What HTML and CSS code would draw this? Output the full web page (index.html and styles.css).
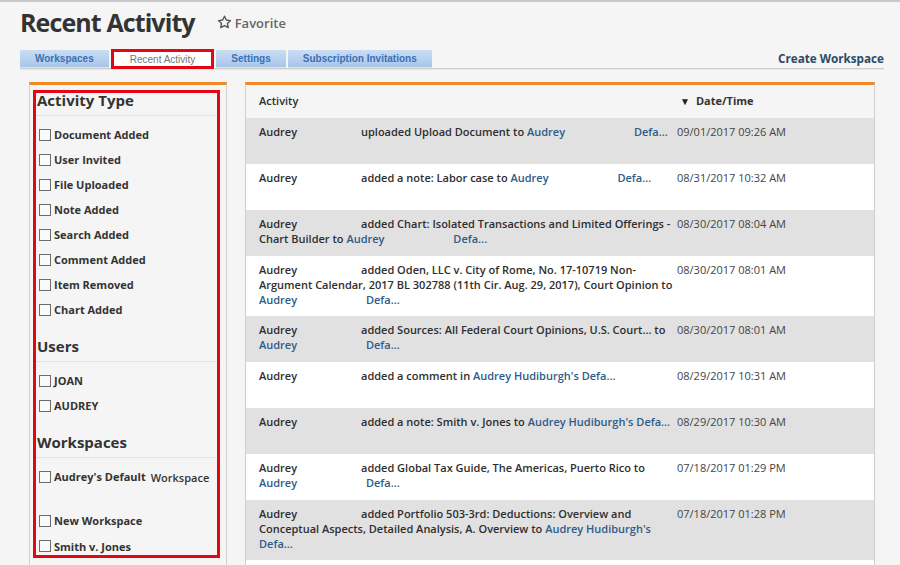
FILE: index.html
```html
<!DOCTYPE html>
<html>
<head>
<meta charset="utf-8">
<title>Recent Activity</title>
<link rel="stylesheet" href="styles.css">
</head>
<body>
<div class="page">
  <header class="title-row">
    <h1 class="title">Recent Activity</h1>
    <span class="favorite">
      <svg class="star" viewBox="0 0 16 16" width="15" height="15"><path d="M8 1.3l1.95 4.1 4.45.55-3.28 3.08.85 4.42L8 11.27l-3.97 2.18.85-4.42L1.6 5.95l4.45-.55z" fill="none" stroke="#555" stroke-width="1.5" stroke-linejoin="round"/></svg>
      Favorite
    </span>
  </header>

  <nav class="tabbar">
    <div class="tabs">
      <span class="tab">Workspaces</span>
      <span class="tab tab-active">Recent Activity</span>
      <span class="tab">Settings</span>
      <span class="tab">Subscription Invitations</span>
    </div>
    <a class="create-link">Create Workspace</a>
  </nav>

  <main class="content">
    <aside class="filters">
      <div class="filter-box">
        <h2 class="filter-heading">Activity Type</h2>
        <ul class="filter-list">
          <li class="filter-item"><span class="checkbox"></span>Document Added</li>
          <li class="filter-item"><span class="checkbox"></span>User Invited</li>
          <li class="filter-item"><span class="checkbox"></span>File Uploaded</li>
          <li class="filter-item"><span class="checkbox"></span>Note Added</li>
          <li class="filter-item"><span class="checkbox"></span>Search Added</li>
          <li class="filter-item"><span class="checkbox"></span>Comment Added</li>
          <li class="filter-item"><span class="checkbox"></span>Item Removed</li>
          <li class="filter-item"><span class="checkbox"></span>Chart Added</li>
        </ul>
        <h2 class="filter-heading section">Users</h2>
        <ul class="filter-list">
          <li class="filter-item"><span class="checkbox"></span>JOAN</li>
          <li class="filter-item"><span class="checkbox"></span>AUDREY</li>
        </ul>
        <h2 class="filter-heading section">Workspaces</h2>
        <ul class="filter-list">
          <li class="filter-item filter-item-tall"><span class="checkbox"></span>Audrey's Default <span class="label-tail">Workspace</span></li>
          <li class="filter-item"><span class="checkbox"></span>New Workspace</li>
          <li class="filter-item filter-item-last"><span class="checkbox"></span>Smith v. Jones</li>
        </ul>
      </div>
    </aside>

    <section class="activity">
      <div class="row head-row">
        <div class="cell-activity">Activity</div>
        <div class="cell-date head-date"><span class="sort-arrow">&#9660;</span>Date/Time</div>
      </div>

      <div class="row shade">
        <div class="cell-activity"><span class="user">Audrey</span>uploaded Upload Document to <a class="ws">Audrey</a> <a class="ws ws-tail">Defa...</a></div>
        <div class="cell-date">09/01/2017 09:26 AM</div>
      </div>
      <div class="row">
        <div class="cell-activity"><span class="user">Audrey</span>added a note: Labor case to <a class="ws">Audrey</a> <a class="ws ws-tail">Defa...</a></div>
        <div class="cell-date">08/31/2017 10:32 AM</div>
      </div>
      <div class="row shade">
        <div class="cell-activity"><span class="user">Audrey</span>added Chart: Isolated Transactions and Limited Offerings - Chart Builder to <a class="ws">Audrey</a> <a class="ws ws-tail">Defa...</a></div>
        <div class="cell-date">08/30/2017 08:04 AM</div>
      </div>
      <div class="row">
        <div class="cell-activity"><span class="user">Audrey</span>added Oden, LLC v. City of Rome, No. 17-10719 Non-Argument Calendar, 2017 BL 302788 (11th Cir. Aug. 29, 2017), Court Opinion to <a class="ws">Audrey</a> <a class="ws ws-tail">Defa...</a></div>
        <div class="cell-date">08/30/2017 08:01 AM</div>
      </div>
      <div class="row shade">
        <div class="cell-activity"><span class="user">Audrey</span>added Sources: All Federal Court Opinions, U.S. Court... to <a class="ws">Audrey</a> <a class="ws ws-tail">Defa...</a></div>
        <div class="cell-date">08/30/2017 08:01 AM</div>
      </div>
      <div class="row">
        <div class="cell-activity"><span class="user">Audrey</span>added a comment in <a class="ws">Audrey Hudiburgh's Defa...</a></div>
        <div class="cell-date">08/29/2017 10:31 AM</div>
      </div>
      <div class="row shade">
        <div class="cell-activity"><span class="user">Audrey</span>added a note: Smith v. Jones to <a class="ws">Audrey Hudiburgh's Defa...</a></div>
        <div class="cell-date">08/29/2017 10:30 AM</div>
      </div>
      <div class="row">
        <div class="cell-activity"><span class="user">Audrey</span>added Global Tax Guide, The Americas, Puerto Rico to <a class="ws">Audrey</a> <a class="ws ws-tail">Defa...</a></div>
        <div class="cell-date">07/18/2017 01:29 PM</div>
      </div>
      <div class="row shade">
        <div class="cell-activity"><span class="user">Audrey</span>added Portfolio 503-3rd: Deductions: Overview and Conceptual Aspects, Detailed Analysis, A. Overview to <a class="ws">Audrey Hudiburgh's Defa...</a></div>
        <div class="cell-date">07/18/2017 01:28 PM</div>
      </div>
      <div class="row"></div>
    </section>
  </main>
</div>
</body>
</html>
```

FILE: styles.css
```css
* { box-sizing: border-box; }

html, body {
  margin: 0;
  padding: 0;
}

body {
  background: #f5f5f5;
  font-family: "Open Sans", "Liberation Sans", sans-serif;
  color: #333;
}

.page {
  height: 565px;
  overflow: hidden;
  border-top: 2px solid #c9c9c9;
}

/* ---------- title ---------- */
.title-row {
  display: flex;
  align-items: center;
  padding: 4px 0 0 20px;
  height: 36px;
}

.title {
  margin: 0;
  font-size: 25px;
  line-height: 30px;
  font-weight: 700;
  letter-spacing: -0.9px;
  color: #333;
}

.favorite {
  display: flex;
  align-items: center;
  gap: 3px;
  margin-left: 22px;
  margin-top: 1px;
  font-size: 13px;
  font-weight: 600;
  color: #666;
}

.star { display: block; }

/* ---------- tabs ---------- */
.tabbar {
  display: flex;
  align-items: flex-end;
  justify-content: space-between;
  margin: 12px 16px 0 20px;
  border-bottom: 1px solid #cfcfcf;
  box-shadow: 0 1px 0 #e6e6e6;
}

.tabs {
  display: flex;
  gap: 2px;
}

.tab {
  display: flex;
  align-items: center;
  height: 18px;
  padding: 0 15px;
  background: linear-gradient(#cadef4, #a8c6ea);
  border-bottom: 1px solid #d6e4f4;
  font-family: "Liberation Sans", Arial, sans-serif;
  font-size: 10px;
  font-weight: 700;
  color: #3a70b6;
  margin-bottom: -1px;
}

.tab-active {
  background: #fff;
  border: 3px solid #e30613;
  padding: 0 16px;
  font-weight: 400;
  color: #777;
  height: 20px;
  margin-top: -1px;
}

.create-link {
  font-size: 11.7px;
  font-weight: 700;
  color: #2c4a69;
  line-height: 17px;
  padding-bottom: 1px;
}

/* ---------- content ---------- */
.content {
  display: flex;
  align-items: flex-start;
  gap: 18px;
  padding: 13px 0 0 29px;
}

.filters {
  width: 198px;
  min-height: 520px;
  border-top: 3px solid #f08a24;
  border-left: 1px solid #cfcfcf;
  border-right: 1px solid #cfcfcf;
}

.filter-box {
  margin: 5px 6px 0 3px;
  border: 3px solid #e30613;
  padding-bottom: 0;
}

.filter-heading {
  margin: 0;
  padding: 0 0 8px 1px;
  font-size: 15px;
  line-height: 14px;
  font-weight: 700;
  color: #333;
  border-bottom: 1px solid #e2e2e2;
}

.filter-heading.section {
  margin-top: 17px;
}

.filter-list {
  list-style: none;
  margin: 0;
  padding: 6px 0 0 3px;
}

.filter-item {
  display: flex;
  align-items: center;
  height: 25px;
  font-size: 11px;
  font-weight: 700;
  color: #333;
}

.filter-item-tall {
  margin-bottom: 19px;
}

.filter-item-last {
  height: 22px;
  align-items: flex-end;
  padding-bottom: 1px;
}

.label-tail {
  margin-left: 5px;
  position: relative;
  top: 1px;
  font-weight: 600;
}

.checkbox {
  display: inline-block;
  width: 12px;
  height: 12px;
  margin-right: 3px;
  border: 1px solid #6c6c6c;
  background: #fafafa;
  flex: none;
}

.filter-item-last .checkbox {
  margin-bottom: 2px;
}

/* ---------- activity table ---------- */
.activity {
  width: 630px;
  min-height: 520px;
  border-top: 3px solid #f08a24;
  border-left: 1px solid #cfcfcf;
  border-right: 1px solid #cfcfcf;
  background: #fff;
}

.row {
  display: grid;
  grid-template-columns: 431px 1fr;
  min-height: 46px;
  padding: 6px 0 9px;
  background: #fff;
  font-size: 11px;
  line-height: 15px;
}

.row.shade { background: #e1e1e1; }

.head-row {
  min-height: 0;
  height: 33px;
  padding: 8px 0 0;
  background: #f5f5f5;
}

.cell-activity {
  padding: 0 2px 0 13px;
  font-weight: 600;
  color: #2e2e2e;
}

.cell-date {
  color: #444;
  font-weight: 400;
}

.head-date {
  padding-left: 3px;
  font-weight: 700;
  color: #333;
}

.sort-arrow {
  font-size: 10px;
  margin-right: 6px;
  color: #222;
}

.user {
  display: inline-block;
  width: 102px;
}

.ws {
  color: #2e5b88;
}

.ws-tail {
  margin-left: 66px;
}
```
